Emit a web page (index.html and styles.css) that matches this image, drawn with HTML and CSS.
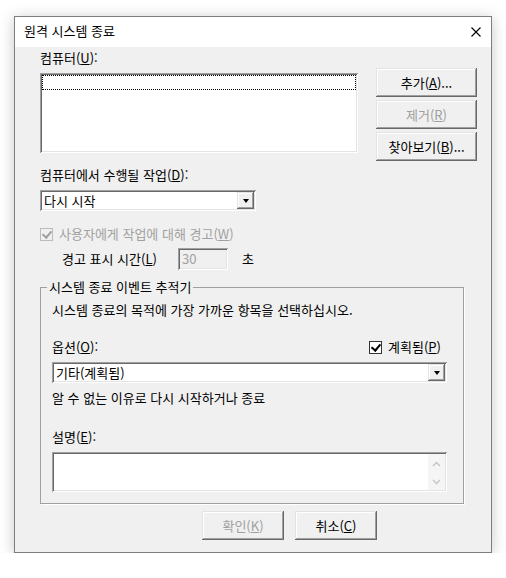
FILE: index.html
```html
<!doctype html>
<html lang="ko">
<head>
    <meta charset="UTF-8">
    <title>원격 시스템 종료</title>
    <link rel="stylesheet" href="styles.css">
</head>
<body>
    <div class="dialog">
        <div class="titlebar">
            <span class="title">원격 시스템 종료</span>
            <svg class="close" width="10" height="10" viewBox="0 0 10 10">
                <path d="M0.5 0.5L9.5 9.5M9.5 0.5L0.5 9.5" stroke="#000" stroke-width="1.1" fill="none"/>
            </svg>
        </div>
        <div class="dialog-body">
            <div class="label label-first">컴퓨터(<u>U</u>):</div>
            <div class="computers">
                <div class="listbox sunken">
                    <div class="focus-row"></div>
                </div>
                <div class="side-buttons">
                    <button class="btn">추가(<u>A</u>)...</button>
                    <button class="btn" disabled>제거(<u>R</u>)</button>
                    <button class="btn">찾아보기(<u>B</u>)...</button>
                </div>
            </div>

            <div class="label label-action">컴퓨터에서 수행될 작업(<u>D</u>):</div>
            <div class="combo combo-action sunken">
                <span class="combo-text">다시 시작</span>
                <span class="combo-arrow"></span>
            </div>

            <div class="check-row warn-row disabled">
                <span class="checkbox checked"></span>
                <span>사용자에게 작업에 대해 경고(<u>W</u>)</span>
            </div>
            <div class="timeout-row">
                <span class="timeout-label">경고 표시 시간(<u>L</u>)</span>
                <span class="textbox sunken">30</span>
                <span class="unit">초</span>
            </div>

            <fieldset class="tracker">
                <legend>시스템 종료 이벤트 추적기</legend>
                <div class="label">시스템 종료의 목적에 가장 가까운 항목을 선택하십시오.</div>
                <div class="option-row">
                    <span>옵션(<u>O</u>):</span>
                    <span class="check-row">
                        <span class="checkbox checked"></span>
                        <span>계획됨(<u>P</u>)</span>
                    </span>
                </div>
                <div class="combo combo-option sunken">
                    <span class="combo-text">기타(계획됨)</span>
                    <span class="combo-arrow"></span>
                </div>
                <div class="label reason">알 수 없는 이유로 다시 시작하거나 종료</div>
                <div class="label comment-label">설명(<u>E</u>):</div>
                <div class="memo sunken">
                    <div class="memo-scroll">
                        <svg width="9" height="6" viewBox="0 0 9 6"><path d="M1 5L4.5 1.5L8 5" stroke="#c4c4c4" stroke-width="1.3" fill="none"/></svg>
                        <svg width="9" height="6" viewBox="0 0 9 6"><path d="M1 1L4.5 4.5L8 1" stroke="#c4c4c4" stroke-width="1.3" fill="none"/></svg>
                    </div>
                </div>
            </fieldset>

            <div class="footer">
                <button class="btn" disabled>확인(<u>K</u>)</button>
                <button class="btn">취소(<u>C</u>)</button>
            </div>
        </div>
    </div>
</body>
</html>
```

FILE: styles.css
```css
*{
    padding: 0;
    margin: 0;
    box-sizing: border-box;
}
body{
    background: #fff;
    font-family: "Noto Sans CJK KR", "Liberation Sans", sans-serif;
    font-size: 13px;
    line-height: 16px;
    color: #000;
}
u{
    text-decoration: underline;
    text-underline-offset: 1px;
}

.dialog{
    width: 478px;
    height: 537px;
    margin: 16px 0 0 14px;
    border: 1px solid #7e7e7e;
    background: #f0f0f0;
    box-shadow: 0 2px 14px rgba(0, 0, 0, .22);
}
.titlebar{
    height: 30px;
    background: #fff;
    display: flex;
    align-items: center;
    justify-content: space-between;
    padding: 0 10px 2px 9px;
}
.close{
    margin-top: 2px;
}

.dialog-body{
    padding: 0 14px 0 25px;
}
.label-first{
    margin-top: 3px;
}

/* raised / sunken edges */
.sunken{
    background: #fff;
    box-shadow: inset 1px 1px #a0a0a0, inset -1px -1px #fff,
                inset 2px 2px #696969, inset -2px -2px #e3e3e3;
}
.btn{
    display: block;
    font: inherit;
    color: #000;
    background: #f0f0f0;
    border: 0;
    box-shadow: inset -1px -1px #696969, inset 1px 1px #e3e3e3,
                inset -2px -2px #a0a0a0, inset 2px 2px #fff;
    text-align: center;
}
.btn:disabled{
    color: #a0a0a0;
}

.computers{
    display: flex;
    margin-top: 2px;
}
.listbox{
    width: 318px;
    height: 80px;
    margin-top: 5px;
    padding: 2px;
}
.focus-row{
    height: 15px;
    border: 1px dotted #000;
}
.side-buttons{
    margin-left: 18px;
    display: flex;
    flex-direction: column;
    gap: 3px;
}
.side-buttons .btn{
    width: 101px;
    height: 29px;
}

.label-action{
    margin-top: 6px;
}
.combo{
    display: flex;
    align-items: center;
    height: 21px;
    padding: 2px;
}
.combo-action{
    width: 216px;
    margin-top: 7px;
}
.combo-text{
    flex: 1;
    padding-left: 2px;
    line-height: 17px;
}
.combo-arrow{
    width: 17px;
    height: 17px;
    background: #f0f0f0;
    box-shadow: inset -1px -1px #696969, inset 1px 1px #e3e3e3,
                inset -2px -2px #a0a0a0, inset 2px 2px #fff;
    display: flex;
    align-items: center;
    justify-content: center;
}
.combo-arrow::after{
    content: "";
    border-left: 3.5px solid transparent;
    border-right: 3.5px solid transparent;
    border-top: 4px solid #000;
    margin-top: 1px;
}

.check-row{
    display: flex;
    align-items: center;
    gap: 6px;
}
.checkbox{
    width: 13px;
    height: 13px;
    border: 1px solid #333;
    background: #fff;
    position: relative;
}
.checkbox.checked::after{
    content: "";
    position: absolute;
    left: 3px;
    top: 0px;
    width: 4px;
    height: 7px;
    border-right: 2px solid #000;
    border-bottom: 2px solid #000;
    transform: rotate(40deg);
}
.warn-row{
    margin-top: 15px;
    gap: 6px;
}
.disabled{
    color: #a0a0a0;
}
.disabled .checkbox{
    border-color: #bcbcbc;
    background: #f0f0f0;
}
.disabled .checkbox::after{
    border-color: #a0a0a0;
}

.timeout-row{
    display: flex;
    align-items: center;
    margin-top: 6px;
    padding-left: 22px;
    height: 22px;
}
.timeout-label{
    width: 116px;
}
.textbox{
    width: 50px;
    height: 22px;
    background: #f0f0f0;
    color: #a0a0a0;
    padding: 3px 4px;
    line-height: 16px;
}
.unit{
    margin-left: 14px;
}

.tracker{
    width: 424px;
    margin-top: 9px;
    border: 1px solid #a0a0a0;
    box-shadow: 1px 1px 0 #fff;
    padding: 7px 16px 11px 11px;
}
.tracker legend{
    padding: 0 2px;
    margin-left: -5px;
}
.option-row{
    display: flex;
    justify-content: space-between;
    align-items: center;
    margin-top: 21px;
    padding-right: 6px;
}
.combo-option{
    margin-top: 7px;
}
.reason{
    margin-top: 7px;
}
.comment-label{
    margin-top: 23px;
}
.memo{
    height: 40px;
    margin-top: 7px;
    padding: 2px;
    display: flex;
    justify-content: flex-end;
}
.memo-scroll{
    width: 17px;
    background: #f5f5f5;
    display: flex;
    flex-direction: column;
    justify-content: space-between;
    align-items: center;
    padding: 7px 0 5px;
}
.memo-scroll svg{
    display: block;
}

.footer{
    display: flex;
    gap: 11px;
    margin: 7px 0 0 162px;
}
.footer .btn{
    width: 82px;
    height: 29px;
}
```
